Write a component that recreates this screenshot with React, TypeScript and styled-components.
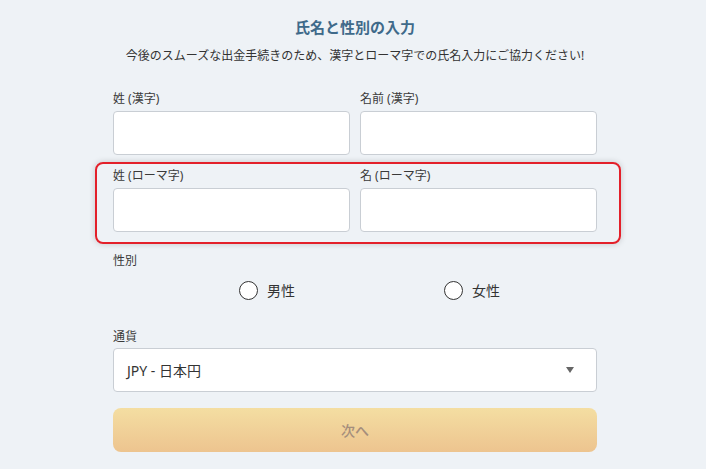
import React, { useState } from 'react';
import styled, { createGlobalStyle } from 'styled-components';

const GlobalStyle = createGlobalStyle`
  html, body {
    margin: 0;
    padding: 0;
    background: #eef2f6;
  }
  body {
    font-family: "Noto Sans", "Noto Sans CJK JP", sans-serif;
    color: #333;
  }
`;

const Page = styled.div`
  width: 484px;
  margin-left: 113px;
  padding-top: 17px;
`;

const Title = styled.h2`
  margin: 0;
  text-align: center;
  font-size: 15px;
  line-height: 20px;
  font-weight: 700;
  color: #3f6a8a;
`;

const Lead = styled.p`
  margin: 9px -40px 0;
  text-align: center;
  font-size: 12px;
  line-height: 20px;
  color: #333;
`;

const Row = styled.div<{ $top: number }>`
  display: grid;
  grid-template-columns: 1fr 1fr;
  column-gap: 10px;
  margin-top: ${p => p.$top}px;
`;

const Highlight = styled.div`
  margin: 7px -24px 0 -18px;
  padding: 4px 22px 10px 16px;
  border: 2px solid #e3202a;
  border-radius: 8px;
  box-shadow: 0 0 6px rgba(0, 0, 0, 0.18);
`;

const Field = styled.label`
  display: flex;
  flex-direction: column;
`;

const Label = styled.span`
  font-size: 12px;
  line-height: 16px;
  color: #3a3a3a;
  margin-bottom: 4px;
`;

const Input = styled.input`
  box-sizing: border-box;
  height: 44px;
  width: 100%;
  border: 1px solid #c9ced4;
  border-radius: 4px;
  background: #fff;
  padding: 0 12px;
  font: inherit;
  font-size: 14px;
  outline: none;
`;

const Section = styled.div<{ $top: number }>`
  margin-top: ${p => p.$top}px;
  display: flex;
  flex-direction: column;
`;

const RadioRow = styled.div`
  display: flex;
  padding-left: 126px;
  margin-top: 7px;
`;

const RadioItem = styled.label`
  flex: 0 0 205px;
  height: 20px;
  display: flex;
  align-items: center;
  gap: 9px;
  font-size: 14px;
  color: #333;
  cursor: pointer;
`;

const Circle = styled.span<{ $on: boolean }>`
  box-sizing: border-box;
  width: 19px;
  height: 19px;
  border-radius: 50%;
  border: 1.5px solid #333;
  background: #fff;
  display: flex;
  align-items: center;
  justify-content: center;
  &::after {
    content: '';
    width: 9px;
    height: 9px;
    border-radius: 50%;
    background: ${p => (p.$on ? '#3f6a8a' : 'transparent')};
  }
`;

const Select = styled.div`
  box-sizing: border-box;
  height: 44px;
  margin-top: -1px;
  border: 1px solid #c9ced4;
  border-radius: 4px;
  background: #fff;
  display: flex;
  align-items: center;
  justify-content: space-between;
  padding: 0 22px 0 13px;
  font-size: 14px;
  color: #333;
`;

const Caret = styled.span`
  width: 0;
  height: 0;
  border-left: 4px solid transparent;
  border-right: 4px solid transparent;
  border-top: 6px solid #666;
`;

const NextButton = styled.button`
  margin-top: 16px;
  width: 100%;
  height: 44px;
  border: none;
  border-radius: 8px;
  background: linear-gradient(180deg, #f4dea2 0%, #edc48f 100%);
  color: #a58e7c;
  font: inherit;
  font-size: 14px;
  font-weight: 500;
  cursor: not-allowed;
`;

const App = () => {
  const [gender, setGender] = useState('');

  return (
    <>
      <GlobalStyle />
      <Page>
        <Title>氏名と性別の入力</Title>
        <Lead>今後のスムーズな出金手続きのため、漢字とローマ字での氏名入力にご協力ください!</Lead>

        <Row $top={25}>
          <Field>
            <Label>姓 (漢字)</Label>
            <Input />
          </Field>
          <Field>
            <Label>名前 (漢字)</Label>
            <Input />
          </Field>
        </Row>

        <Highlight>
          <Row $top={0}>
            <Field>
              <Label>姓 (ローマ字)</Label>
              <Input />
            </Field>
            <Field>
              <Label>名 (ローマ字)</Label>
              <Input />
            </Field>
          </Row>
        </Highlight>

        <Section $top={9}>
          <Label>性別</Label>
          <RadioRow>
            <RadioItem onClick={() => setGender('m')}>
              <Circle $on={gender === 'm'} />
              男性
            </RadioItem>
            <RadioItem onClick={() => setGender('f')}>
              <Circle $on={gender === 'f'} />
              女性
            </RadioItem>
          </RadioRow>
        </Section>

        <Section $top={29}>
          <Label>通貨</Label>
          <Select>
            <span>JPY - 日本円</span>
            <Caret />
          </Select>
        </Section>

        <NextButton disabled>次へ</NextButton>
      </Page>
    </>
  );
};

export default App;
